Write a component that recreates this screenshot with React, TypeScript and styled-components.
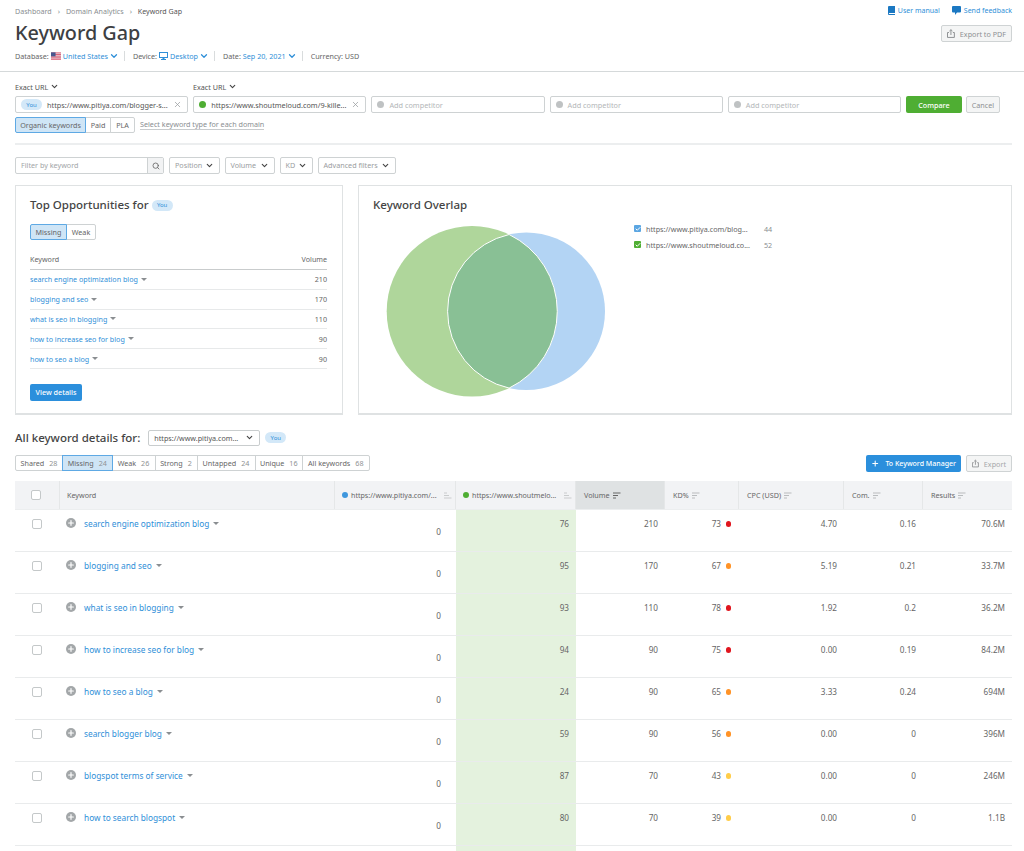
import React from "react";
import styled, { createGlobalStyle } from "styled-components";
import { ChevronDown, Check, Plus, Search, X } from "lucide-react";

const GlobalStyle = createGlobalStyle`
  html, body { margin: 0; padding: 0; background: #fff; }
  body { width: 1024px; height: 851px; overflow: hidden; font-family: "Noto Sans", "Open Sans", sans-serif; color: #555; }
  * { box-sizing: border-box; }
`;

const BLUE = "#2f8fd8";
const COLUMNS = "45px 275px 121px 120px 89px 74px 105px 79px 89px";

const Page = styled.div`
  width: 1024px;
  height: 851px;
  overflow: hidden;
`;
const Header = styled.header`
  height: 72px;
  padding: 5px 12px 0 15px;
  border-bottom: 1px solid #d5d9da;
`;
const TopRow = styled.div`
  display: flex;
  justify-content: space-between;
  align-items: center;
  height: 11px;
`;
const Crumbs = styled.div`
  display: flex;
  align-items: center;
  gap: 6px;
  font-size: 7.1px;
  color: #8a8e91;
  b { font-weight: 400; color: #555; }
`;
const HelpLinks = styled.div`
  display: flex;
  gap: 12px;
`;
const HelpLink = styled.span`
  display: flex;
  align-items: center;
  gap: 3px;
  font-size: 7px;
  color: ${BLUE};
`;
const TitleRow = styled.div`
  display: flex;
  justify-content: space-between;
  align-items: flex-start;
  margin-top: 3px;
  height: 28px;
`;
const Title = styled.h1`
  margin: 0;
  font-size: 19.8px;
  line-height: 28px;
  font-weight: 500;
  color: #3d4043;
`;
const GhostButton = styled.button`
  display: flex;
  align-items: center;
  justify-content: center;
  gap: 5px;
  height: 17px;
  padding: 0 5px;
  margin: 0;
  font: inherit;
  font-size: 7.2px;
  white-space: nowrap;
  color: #8d9092;
  background: #f4f5f5;
  border: 1px solid #cfd3d4;
  border-radius: 2px;
`;
const ExportPdf = styled(GhostButton)`
  width: 71px;
  margin-top: 6px;
`;
const ExportBtn = styled(GhostButton)`
  width: 46px;
  color: #a4a7a9;
`;
const MetaRow = styled.div`
  display: flex;
  align-items: center;
  height: 10px;
  margin-top: 4px;
  font-size: 7.2px;
  color: #666;
`;
const MetaItem = styled.span`
  display: flex;
  align-items: center;
  gap: 2px;
  padding-right: 7px;
  margin-right: 8px;
  border-right: 1px solid #d9dcdd;
  height: 10px;
  &:last-child { border-right: 0; }
`;
const MetaValue = styled.span`
  display: flex;
  align-items: center;
  gap: 1px;
  color: ${BLUE};
  svg { margin-right: -2px; }
`;

const Setup = styled.section`
  margin: 0 12px 0 15px;
  height: 73px;
  padding-top: 10px;
  border-bottom: 2px solid #eceeef;
`;
const ModeRow = styled.div`
  display: flex;
  height: 9px;
  margin-bottom: 5px;
`;
const Mode = styled.span`
  display: flex;
  align-items: center;
  gap: 2px;
  width: 178px;
  font-size: 7.2px;
  color: #555;
`;
const InputRow = styled.div`
  display: flex;
  gap: 5px;
  height: 17px;
`;
const UrlField = styled.div`
  display: flex;
  align-items: center;
  gap: 5px;
  width: 173.2px;
  height: 17px;
  padding: 0 5px;
  border: 1px solid #ced2d3;
  border-radius: 2px;
  font-size: 7.3px;
  color: #555;
  white-space: nowrap;
`;
const UrlText = styled.span<{ $muted?: boolean }>`
  flex: 1;
  min-width: 0;
  color: ${(p) => (p.$muted ? "#b3b6b8" : "#555")};
`;
const Dot = styled.i<{ $color: string; $size?: number }>`
  display: inline-block;
  flex: none;
  width: ${(p) => p.$size ?? 7}px;
  height: ${(p) => p.$size ?? 7}px;
  border-radius: 50%;
  background: ${(p) => p.$color};
`;
const KdDot = styled(Dot)`
  margin: 3px 1px 0 0;
`;
const YouBadge = styled.span`
  display: inline-flex;
  align-items: center;
  justify-content: center;
  flex: none;
  width: 21px;
  height: 11px;
  border-radius: 6px;
  background: #d3e8f8;
  color: ${BLUE};
  font-size: 6px;
  font-weight: 400;
`;
const Compare = styled.button`
  width: 56px;
  height: 17px;
  margin: 0;
  padding: 0;
  border: 0;
  border-radius: 2px;
  background: #4fae33;
  color: #fff;
  font: inherit;
  font-size: 7.2px;
  font-weight: 500;
`;
const Cancel = styled(GhostButton)`
  width: 34px;
  margin-left: -1px;
`;
const TypeRow = styled.div`
  display: flex;
  align-items: center;
  gap: 5px;
  margin-top: 4px;
`;
const Segmented = styled.div`
  display: flex;
  height: 16px;
  border-radius: 2px;
`;
const Segment = styled.span<{ $on?: boolean; $w: number }>`
  display: flex;
  align-items: center;
  justify-content: center;
  gap: 5px;
  width: ${(p) => p.$w}px;
  margin-left: -1px;
  font-size: 7.2px;
  white-space: nowrap;
  color: #666;
  background: ${(p) => (p.$on ? "#cfe5f6" : "#fff")};
  border: 1px solid ${(p) => (p.$on ? "#5ea9e4" : "#ced2d3")};
  position: relative;
  z-index: ${(p) => (p.$on ? 1 : 0)};
  &:first-child { margin-left: 0; border-radius: 2px 0 0 2px; }
  &:last-child { border-radius: 0 2px 2px 0; }
  em { font-style: normal; color: #8f9294; }
`;
const Hint = styled.span`
  font-size: 7.2px;
  color: #8a8e91;
  border-bottom: 1px solid #c8cbcd;
  line-height: 9px;
`;

const Filters = styled.div`
  display: flex;
  gap: 5px;
  margin: 12px 12px 0 15px;
  height: 17px;
`;
const SearchBox = styled.div`
  display: flex;
  width: 149px;
  height: 17px;
  border: 1px solid #ced2d3;
  border-radius: 2px;
  font-size: 7.2px;
  line-height: 15px;
  color: #a2a5a7;
  align-items: flex-start;
  padding-left: 5px;
  justify-content: space-between;
`;
const SearchIcon = styled.span`
  display: flex;
  align-items: center;
  justify-content: center;
  width: 16px;
  height: 15px;
  background: #f2f3f4;
  border-left: 1px solid #ced2d3;
  color: #666;
`;
const FilterBtn = styled.span<{ $w: number }>`
  display: flex;
  align-items: center;
  justify-content: space-between;
  width: ${(p) => p.$w}px;
  padding: 0 5px 1px;
  border: 1px solid #ced2d3;
  border-radius: 2px;
  font-size: 7.2px;
  color: #9a9da0;
  svg { color: #444; }
`;

const Cards = styled.div`
  display: flex;
  gap: 15px;
  margin: 11px 12px 0 15px;
  height: 230px;
`;
const Card = styled.section`
  border: 1px solid #dfe2e3;
  border-bottom-width: 2px;
  padding: 12px 15px 0 14px;
`;
const OppCard = styled(Card)`
  width: 328px;
  flex: none;
`;
const OverlapCard = styled(Card)`
  flex: 1;
  position: relative;
`;
const CardTitle = styled.h2`
  display: flex;
  align-items: center;
  gap: 3px;
  margin: 0;
  font-size: 11.5px;
  line-height: 14px;
  font-weight: 500;
  color: #444;
`;
const CardTabs = styled(Segmented)`
  margin-top: 12px;
`;
const OppHead = styled.div`
  display: flex;
  justify-content: space-between;
  align-items: center;
  height: 18px;
  margin-top: 12px;
  border-bottom: 1px solid #c9cccd;
  font-size: 7.15px;
  padding-bottom: 3px;
  color: #666;
`;
const OppRow = styled.div`
  display: flex;
  justify-content: space-between;
  align-items: center;
  height: 19.8px;
  border-bottom: 1px solid #e7e9ea;
  font-size: 7.15px;
  color: #666;
`;
const KeyLink = styled.span`
  display: flex;
  align-items: center;
  gap: 3px;
  color: ${BLUE};
`;
const Caret = styled.i<{ $big?: boolean }>`
  display: inline-block;
  width: 0;
  height: 0;
  border-left: ${(p) => (p.$big ? 3.5 : 3)}px solid transparent;
  border-right: ${(p) => (p.$big ? 3.5 : 3)}px solid transparent;
  border-top: ${(p) => (p.$big ? 3.5 : 3)}px solid #8a8e91;
`;
const PrimaryBtn = styled.button`
  display: flex;
  align-items: center;
  justify-content: center;
  gap: 6px;
  height: 17px;
  padding: 0 5px;
  margin: 0;
  border: 0;
  border-radius: 2px;
  background: #2b8fdc;
  color: #fff;
  font: inherit;
  font-size: 7.2px;
  font-weight: 500;
  white-space: nowrap;
`;
const ViewDetails = styled(PrimaryBtn)`
  width: 52px;
  margin-top: 15px;
`;
const ManagerBtn = styled(PrimaryBtn)`
  width: 95px;
  font-size: 7px;
`;
const VennBody = styled.div`
  display: flex;
  margin-top: 14px;
`;
const VennChart = styled.svg`
  width: 247px;
  height: 174px;
  flex: none;
`;
const Legend = styled.div`
  display: flex;
  flex-direction: column;
  gap: 9px;
  margin-left: 14px;
  margin-top: -1px;
`;
const LegendRow = styled.div`
  display: flex;
  align-items: center;
  height: 7px;
  font-size: 7.2px;
  color: #666;
  span:nth-child(2) { width: 118px; margin-left: 5px; white-space: nowrap; }
  span:nth-child(3) { color: #8a8e91; }
`;
const LegendBox = styled.i<{ $color: string }>`
  display: flex;
  align-items: center;
  justify-content: center;
  width: 7px;
  height: 7px;
  border-radius: 1px;
  background: ${(p) => p.$color};
  color: #fff;
`;

const Details = styled.section`
  margin: 14px 12px 0 15px;
`;
const DetailsHead = styled.div`
  display: flex;
  align-items: center;
  gap: 5px;
  height: 17px;
`;
const DetailsTitle = styled.h2`
  margin: 0 3px 0 0;
  font-size: 11.5px;
  font-weight: 500;
  color: #444;
`;
const SiteSelect = styled.span`
  display: flex;
  align-items: center;
  justify-content: space-between;
  width: 112px;
  height: 16px;
  padding: 0 5px;
  border: 1px solid #c9cdce;
  border-radius: 2px;
  font-size: 7.2px;
  color: #555;
`;
const TabsRow = styled.div`
  display: flex;
  justify-content: space-between;
  height: 17px;
  margin-top: 9px;
`;
const ActionGroup = styled.div`
  display: flex;
  gap: 5px;
`;
const TableWrap = styled.div`
  margin-top: 9px;
`;
const HeadRow = styled.div`
  display: grid;
  grid-template-columns: ${COLUMNS};
  height: 29px;
  background: #f2f3f5;
  border-bottom: 1px solid #eceeef;
`;
const HeadCell = styled.div<{ $active?: boolean }>`
  display: flex;
  align-items: center;
  gap: 3px;
  padding: 0 7px 0 8px;
  min-width: 0;
  font-size: 7.2px;
  color: #666;
  border-right: 1px solid #e5e7e8;
  background: ${(p) => (p.$active ? "#dfe2e3" : "transparent")};
  white-space: nowrap;
  &:last-child { border-right: 0; }
`;
const CheckHead = styled(HeadCell)`
  justify-content: center;
  padding: 0 2px 0 0;
`;
const KeywordHead = styled(HeadCell)`
  padding-left: 7px;
`;
const SiteHead = styled(HeadCell)`
  padding: 0 3px 0 7px;
  font-size: 7.1px;
`;
const SiteHeadText = styled.span`
  flex: 1;
`;
const Row = styled.div`
  display: grid;
  grid-template-columns: ${COLUMNS};
  height: 42px;
  border-bottom: 1px solid #e9ebec;
  font-size: 8.2px;
  color: #666;
`;
const Cell = styled.div<{ $green?: boolean }>`
  display: flex;
  justify-content: flex-end;
  align-items: flex-start;
  gap: 4.5px;
  padding: 8px 7px 0;
  line-height: 11px;
  background: ${(p) => (p.$green ? "#e4f2de" : "transparent")};
`;
const CheckCell = styled(Cell)`
  justify-content: center;
  padding: 9px 2px 0 0;
`;
const ZeroCell = styled(Cell)`
  padding: 16px 15px 0 0;
`;
const KeywordCell = styled(Cell)`
  justify-content: flex-start;
  padding: 8px 0 0 6px;
  color: ${BLUE};
  font-size: 8.3px;
  gap: 0;
`;
const CheckBox = styled.i`
  display: block;
  width: 10px;
  height: 10px;
  background: #fff;
  border: 1px solid #c4c8c9;
  border-radius: 2px;
`;
const AddCircle = styled.i`
  display: flex;
  align-items: center;
  justify-content: center;
  width: 10px;
  height: 10px;
  margin-right: 8px;
  border-radius: 50%;
  background: #a3a7a9;
  color: #fff;
`;
const KeywordCaret = styled.span`
  display: flex;
  height: 11px;
  align-items: center;
  margin-left: 4px;
`;

const Usa = () => (
  <svg width="10" height="8" viewBox="0 0 11 8" aria-hidden="true">
    <rect width="11" height="8" fill="#e9e9ee" />
    <path d="M0 .6h11M0 2.4h11M0 4.2h11M0 6h11M0 7.6h11" stroke="#d9415a" strokeWidth=".9" />
    <rect width="5" height="4.4" fill="#48588f" />
  </svg>
);
const Desktop = () => (
  <svg width="9" height="8" viewBox="0 0 9 8" fill={BLUE} aria-hidden="true">
    <path d="M0 0h9v6H5.500v1H7v1H2V7h1.500V6H0zM1 1v4h7V1z" />
  </svg>
);
const Book = () => (
  <svg width="7" height="9" viewBox="0 0 7 9" fill="#1b78c2" aria-hidden="true">
    <path d="M1 0h6v7H1.200a.6.6 0 0 0 0 1.100H7V9H1a1 1 0 0 1-1-1V1a1 1 0 0 1 1-1z" />
  </svg>
);
const Bubble = () => (
  <svg width="9" height="9" viewBox="0 0 9 9" fill="#1b78c2" aria-hidden="true">
    <path d="M1 0h7a1 1 0 0 1 1 1v4.500a1 1 0 0 1-1 1H5L3 9V6.500H1a1 1 0 0 1-1-1V1a1 1 0 0 1 1-1z" />
  </svg>
);
const Upload = () => (
  <svg width="8" height="9" viewBox="0 0 8 9" fill="none" stroke="#8d9092" strokeWidth="1" aria-hidden="true">
    <path d="M2 3.500H.5v5h7v-5H6M4 6V.8M2.500 2 4 .6 5.500 2" />
  </svg>
);
const SortIcon = ({ dark }: { dark?: boolean }) => (
  <svg width="8" height="7" viewBox="0 0 8 7" stroke={dark ? "#666" : "#b9bcbe"} strokeWidth="1.100" aria-hidden="true" style={{ flex: "none" }}>
    <path d="M0 1h7.500M0 3.500h5M0 6h3" />
  </svg>
);
const SortUpIcon = () => (
  <svg width="8" height="7" viewBox="0 0 8 7" stroke="#c9cccd" strokeWidth="1.100" aria-hidden="true" style={{ flex: "none" }}>
    <path d="M0 1h3M0 3.500h5M0 6h7.500" />
  </svg>
);
const Chev = ({ size = 9, color = BLUE }: { size?: number; color?: string }) => (
  <ChevronDown size={size} color={color} strokeWidth={3} />
);

const opportunities = [
  ["search engine optimization blog", "210"],
  ["blogging and seo", "170"],
  ["what is seo in blogging", "110"],
  ["how to increase seo for blog", "90"],
  ["how to seo a blog", "90"],
];

const tabs: [string, string, number, boolean?][] = [
  ["Shared", "28", 48],
  ["Missing", "24", 50.5, true],
  ["Weak", "26", 44],
  ["Strong", "2", 43],
  ["Untapped", "24", 59],
  ["Unique", "16", 48.5],
  ["All keywords", "68", 67.5],
];

const DOT = { red: "#e0161f", orange: "#ff9327", yellow: "#ffcd4a" };

const rows = [
  { k: "search engine optimization blog", s: 76, v: 210, kd: 73, dot: DOT.red, cpc: "4.70", com: "0.16", res: "70.6M" },
  { k: "blogging and seo", s: 95, v: 170, kd: 67, dot: DOT.orange, cpc: "5.19", com: "0.21", res: "33.7M" },
  { k: "what is seo in blogging", s: 93, v: 110, kd: 78, dot: DOT.red, cpc: "1.92", com: "0.2", res: "36.2M" },
  { k: "how to increase seo for blog", s: 94, v: 90, kd: 75, dot: DOT.red, cpc: "0.00", com: "0.19", res: "84.2M" },
  { k: "how to seo a blog", s: 24, v: 90, kd: 65, dot: DOT.orange, cpc: "3.33", com: "0.24", res: "694M" },
  { k: "search blogger blog", s: 59, v: 90, kd: 56, dot: DOT.orange, cpc: "0.00", com: "0", res: "396M" },
  { k: "blogspot terms of service", s: 87, v: 70, kd: 43, dot: DOT.yellow, cpc: "0.00", com: "0", res: "246M" },
  { k: "how to search blogspot", s: 80, v: 70, kd: 39, dot: DOT.yellow, cpc: "0.00", com: "0", res: "1.1B" },
];

export default function App() {
  return (
    <Page>
      <GlobalStyle />
      <Header>
        <TopRow>
          <Crumbs>
            Dashboard <span>›</span> Domain Analytics <span>›</span> <b>Keyword Gap</b>
          </Crumbs>
          <HelpLinks>
            <HelpLink><Book /> User manual</HelpLink>
            <HelpLink><Bubble /> Send feedback</HelpLink>
          </HelpLinks>
        </TopRow>
        <TitleRow>
          <Title>Keyword Gap</Title>
          <ExportPdf><Upload /> Export to PDF</ExportPdf>
        </TitleRow>
        <MetaRow>
          <MetaItem>Database: <Usa /> <MetaValue>United States <Chev size={10} /></MetaValue></MetaItem>
          <MetaItem>Device: <Desktop /> <MetaValue>Desktop <Chev size={10} /></MetaValue></MetaItem>
          <MetaItem>Date: <MetaValue>Sep 20, 2021 <Chev size={10} /></MetaValue></MetaItem>
          <MetaItem>Currency: USD</MetaItem>
        </MetaRow>
      </Header>

      <Setup>
        <ModeRow>
          <Mode>Exact URL <Chev color="#444" /></Mode>
          <Mode>Exact URL <Chev color="#444" /></Mode>
        </ModeRow>
        <InputRow>
          <UrlField>
            <YouBadge>You</YouBadge>
            <UrlText>https://www.pitiya.com/blogger-s...</UrlText>
            <X size={9} color="#9a9da0" />
          </UrlField>
          <UrlField>
            <Dot $color="#4fae33" />
            <UrlText>https://www.shoutmeloud.com/9-kille...</UrlText>
            <X size={9} color="#9a9da0" />
          </UrlField>
          <UrlField><Dot $color="#bfc2c3" /><UrlText $muted>Add competitor</UrlText></UrlField>
          <UrlField><Dot $color="#bfc2c3" /><UrlText $muted>Add competitor</UrlText></UrlField>
          <UrlField><Dot $color="#bfc2c3" /><UrlText $muted>Add competitor</UrlText></UrlField>
          <Compare>Compare</Compare>
          <Cancel>Cancel</Cancel>
        </InputRow>
        <TypeRow>
          <Segmented>
            <Segment $on $w={71}>Organic keywords</Segment>
            <Segment $w={26}>Paid</Segment>
            <Segment $w={25}>PLA</Segment>
          </Segmented>
          <Hint>Select keyword type for each domain</Hint>
        </TypeRow>
      </Setup>

      <Filters>
        <SearchBox>
          Filter by keyword
          <SearchIcon><Search size={8} strokeWidth={2.5} /></SearchIcon>
        </SearchBox>
        <FilterBtn $w={50.5}>Position <Chev color="#444" /></FilterBtn>
        <FilterBtn $w={50}>Volume <Chev color="#444" /></FilterBtn>
        <FilterBtn $w={33}>KD <Chev color="#444" /></FilterBtn>
        <FilterBtn $w={78}>Advanced filters <Chev color="#444" /></FilterBtn>
      </Filters>

      <Cards>
        <OppCard>
          <CardTitle>Top Opportunities for <YouBadge>You</YouBadge></CardTitle>
          <CardTabs>
            <Segment $on $w={37}>Missing</Segment>
            <Segment $w={30}>Weak</Segment>
          </CardTabs>
          <OppHead><span>Keyword</span><span>Volume</span></OppHead>
          {opportunities.map(([k, v]) => (
            <OppRow key={k}>
              <KeyLink>{k} <Caret $big /></KeyLink>
              <span>{v}</span>
            </OppRow>
          ))}
          <ViewDetails>View details</ViewDetails>
        </OppCard>
        <OverlapCard>
          <CardTitle>Keyword Overlap</CardTitle>
          <VennBody>
            <VennChart viewBox="373 226 247 174">
              <circle cx="526.3" cy="311.300" r="78.700" fill="#b3d4f4" />
              <circle cx="472" cy="311.300" r="85.300" fill="#afd69b" />
              <path
                d="M509.100 234.500A78.700 78.700 0 0 0 509.100 388.100A85.300 85.300 0 0 0 509.100 234.500Z"
                fill="#89c095"
                stroke="#fff"
                strokeWidth="1"
              />
            </VennChart>
            <Legend>
              <LegendRow>
                <LegendBox $color="#5ba6e2"><Check size={6} strokeWidth={4} /></LegendBox>
                <span>https://www.pitiya.com/blog...</span>
                <span>44</span>
              </LegendRow>
              <LegendRow>
                <LegendBox $color="#4fae33"><Check size={6} strokeWidth={4} /></LegendBox>
                <span>https://www.shoutmeloud.co...</span>
                <span>52</span>
              </LegendRow>
            </Legend>
          </VennBody>
        </OverlapCard>
      </Cards>

      <Details>
        <DetailsHead>
          <DetailsTitle>All keyword details for:</DetailsTitle>
          <SiteSelect>https://www.pitiya.com... <Chev color="#444" /></SiteSelect>
          <YouBadge>You</YouBadge>
        </DetailsHead>
        <TabsRow>
          <Segmented>
            {tabs.map(([label, n, w, on]) => (
              <Segment key={label} $w={w} $on={on}>{label} <em>{n}</em></Segment>
            ))}
          </Segmented>
          <ActionGroup>
            <ManagerBtn><Plus size={9} strokeWidth={3} /> To Keyword Manager</ManagerBtn>
            <ExportBtn><Upload /> Export</ExportBtn>
          </ActionGroup>
        </TabsRow>
        <TableWrap>
          <HeadRow>
            <CheckHead><CheckBox /></CheckHead>
            <KeywordHead>Keyword</KeywordHead>
            <SiteHead>
              <Dot $color="#3f97dd" $size={6} />
              <SiteHeadText>https://www.pitiya.com/...</SiteHeadText>
              <SortUpIcon />
            </SiteHead>
            <SiteHead>
              <Dot $color="#4fae33" $size={6} />
              <SiteHeadText>https://www.shoutmelo...</SiteHeadText>
              <SortUpIcon />
            </SiteHead>
            <HeadCell $active>Volume<SortIcon dark /></HeadCell>
            <HeadCell>KD%<SortIcon /></HeadCell>
            <HeadCell>CPC (USD)<SortIcon /></HeadCell>
            <HeadCell>Com.<SortIcon /></HeadCell>
            <HeadCell>Results<SortIcon /></HeadCell>
          </HeadRow>
          {rows.map((r) => (
            <Row key={r.k}>
              <CheckCell><CheckBox /></CheckCell>
              <KeywordCell>
                <AddCircle><Plus size={8} strokeWidth={3.500} /></AddCircle>
                {r.k}
                <KeywordCaret><Caret /></KeywordCaret>
              </KeywordCell>
              <ZeroCell>0</ZeroCell>
              <Cell $green>{r.s}</Cell>
              <Cell>{r.v}</Cell>
              <Cell>{r.kd} <KdDot $color={r.dot} $size={5.5} /></Cell>
              <Cell>{r.cpc}</Cell>
              <Cell>{r.com}</Cell>
              <Cell>{r.res}</Cell>
            </Row>
          ))}
          <Row>
            <Cell /><Cell /><Cell /><Cell $green /><Cell /><Cell /><Cell /><Cell /><Cell />
          </Row>
        </TableWrap>
      </Details>
    </Page>
  );
}
